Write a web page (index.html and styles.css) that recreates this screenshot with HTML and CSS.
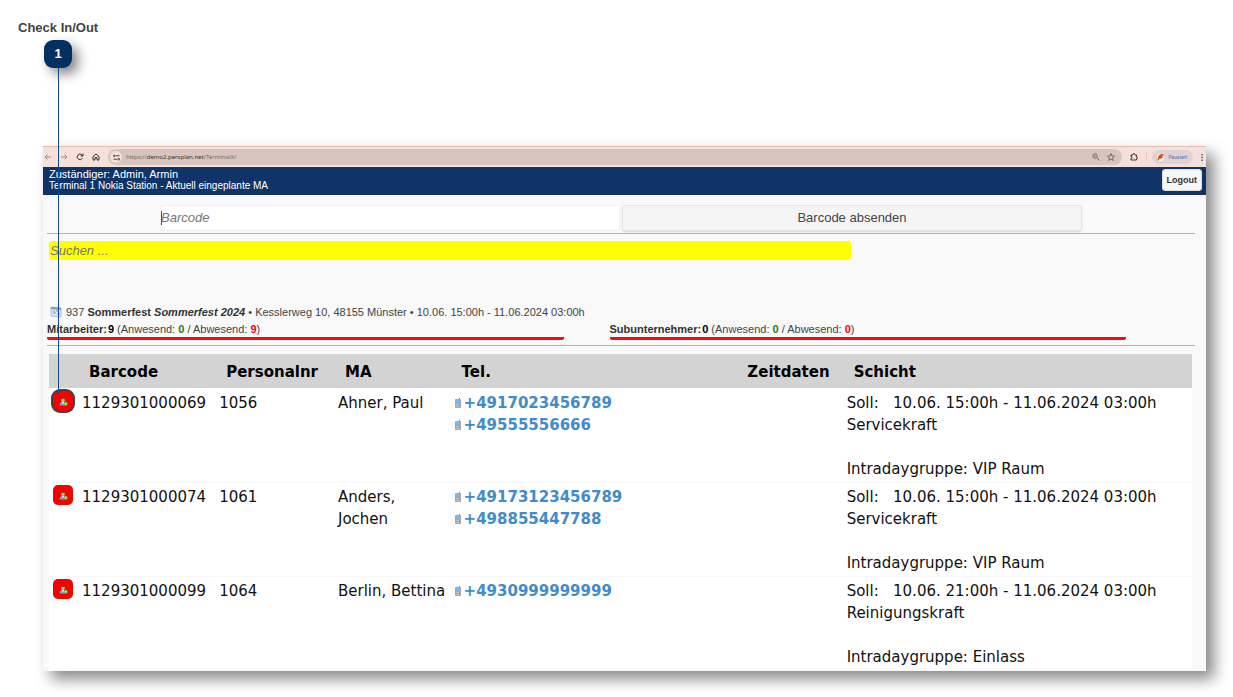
FILE: index.html
```html
<!DOCTYPE html>
<html lang="de">
<head>
<meta charset="utf-8">
<meta name="viewport" content="width=device-width, initial-scale=1">
<title>Check In/Out</title>
<link rel="stylesheet" href="styles.css">
</head>
<body>
<svg class="defs" aria-hidden="true">
  <symbol id="person" viewBox="0 0 16 16">
    <path d="M1 15c0-4 2-6 6-6s6 2 6 6z" fill="#6fa4e0"/>
    <path d="M5 9l2 4 2-4z" fill="#fff"/>
    <circle cx="7" cy="5.500" r="3.500" fill="#e9b77c"/>
    <path d="M3.500 5C3 0 11 0 10.500 5 9 3 6 3.500 3.500 5z" fill="#75502b"/>
    <circle cx="12" cy="12" r="3.500" fill="#65b548"/>
    <path d="M10 12h4m-2-2v4" stroke="#e6f6df" fill="none"/>
  </symbol>
  <symbol id="phone" viewBox="0 0 6 10">
    <path d="M4 0h1v2H4z" fill="#777"/>
    <rect x="0" y="1" width="6" height="9" rx="1" fill="#a3a7aa"/>
    <rect x="1" y="2" width="3" height="3" fill="#79b7ef"/>
    <path d="M1 6.500h3M1 8.500h3" stroke="#c4c4c4"/>
  </symbol>
</svg>
<h1 class="title">Check In/Out</h1>
<div class="callout"><span class="badge">1</span><span class="pointer"></span></div>

<main class="window">
  <div class="browser-bar">
    <nav class="nav-icons" aria-label="Browser">
      <svg class="icon faded" viewBox="0 0 16 16"><path d="M14 8H3M7 3L2 8l5 5"/></svg>
      <svg class="icon faded" viewBox="0 0 16 16"><path d="M2 8h11M9 3l5 5-5 5"/></svg>
      <svg class="icon strong" viewBox="0 0 16 16"><path d="M13 10a5.500 5.500 0 1 1-1-6l2 2M14 1v5H9"/></svg>
      <svg class="icon strong" viewBox="0 0 16 16"><path d="M2 7l6-5 6 5v7h-4V9H6v5H2z"/></svg>
    </nav>
    <div class="address">
      <span class="site-info"><svg class="icon strong" viewBox="0 0 16 16"><path d="M7 4h8M1 12h8"/><circle cx="3" cy="4" r="2"/><circle cx="13" cy="12" r="2"/></svg></span>
      <span class="url">https://<b>demo2.persplan.net</b>/TerminalX/</span>
      <svg class="icon" viewBox="0 0 16 16"><circle cx="6" cy="6" r="4.500"/><path d="M4 6h4M9.500 9.500L15 15"/></svg>
      <svg class="icon" viewBox="0 0 16 16"><path d="M8 1l2 5 5 .5-4 3.500 1.500 5L8 12l-4.500 3L5 10 1 6.500 6 6z"/></svg>
    </div>
    <svg class="icon strong" viewBox="0 0 16 16"><path d="M2 4h4c0-4 4-4 4 0h3v4c3 0 3 3 0 3v3H2v-4c3 0 3-3 0-3z"/></svg>
    <span class="divider"></span>
    <span class="profile"><svg class="flame" viewBox="0 0 10 10"><circle cx="5" cy="5" r="5" fill="#fff"/><path d="M1 9L3 2l5-2 1 2-3 2 2 1-5 2z" fill="#dc4b12" stroke="#dc4b12"/></svg>Pausiert</span>
    <svg class="dots" viewBox="0 0 2 10"><path d="M0 1h2M0 5h2M0 9h2" stroke="#555" stroke-width="2"/></svg>
  </div>

  <header class="app-header">
    <div class="station"><p class="user">Zuständiger: Admin, Armin</p><p>Terminal 1 Nokia Station - Aktuell eingeplante MA</p></div>
    <button class="logout" type="button">Logout</button>
  </header>

  <section class="content">
    <form class="barcode-form">
      <input class="barcode-input" type="text" placeholder="Barcode" aria-label="Barcode">
      <button class="submit" type="button">Barcode absenden</button>
    </form>
    <div class="search-row"><input class="search" type="search" placeholder="Suchen ..." aria-label="Suchen"></div>
    <div class="event">
      <svg class="event-icon" viewBox="0 0 12 12"><path d="M1 1l10 1v9L1 10z" fill="#dbe9f3" stroke="#a9bfcd"/><path d="M1 2l10 1" stroke="#7d9cb1" stroke-width="2"/><path d="M3 5h2m1 0h3M3 7h3m1 1h3" stroke="#68a2cc"/></svg>
      <span>937 <strong>Sommerfest <em>Sommerfest 2024</em></strong> • Kesslerweg 10, 48155 Münster • 10.06. 15:00h - 11.06.2024 03:00h</span>
    </div>
    <div class="counts">
      <p class="count"><strong>Mitarbeiter:<span class="total">9</span></strong> (Anwesend: <b class="present">0</b> / Abwesend: <b class="absent">9</b>)</p>
      <p class="count"><strong>Subunternehmer:<span class="total">0</span></strong> (Anwesend: <b class="present">0</b> / Abwesend: <b class="absent">0</b>)</p>
    </div>

    <table class="staff">
      <colgroup><col class="c-action"><col class="c-barcode"><col class="c-number"><col class="c-name"><col class="c-phone"><col class="c-time"><col></colgroup>
      <thead><tr><td></td><th>Barcode</th><th>Personalnr</th><th>MA</th><th>Tel.</th><th>Zeitdaten</th><th>Schicht</th></tr></thead>
      <tbody>
        <tr>
          <td class="action"><button class="check selected" type="button" aria-label="Check In/Out Ahner, Paul"><svg><use href="#person"/></svg></button></td>
          <td>1129301000069</td><td>1056</td><td>Ahner, Paul</td>
          <td><a class="tel" href="tel:+4917023456789"><svg><use href="#phone"/></svg>+4917023456789</a><a class="tel" href="tel:+49555556666"><svg><use href="#phone"/></svg>+49555556666</a></td>
          <td></td><td>Soll: &nbsp; 10.06. 15:00h - 11.06.2024 03:00h<br>Servicekraft<br><br>Intradaygruppe: VIP Raum</td>
        </tr>
        <tr>
          <td class="action"><button class="check" type="button" aria-label="Check In/Out Anders, Jochen"><svg><use href="#person"/></svg></button></td>
          <td>1129301000074</td><td>1061</td><td>Anders, Jochen</td>
          <td><a class="tel" href="tel:+49173123456789"><svg><use href="#phone"/></svg>+49173123456789</a><a class="tel" href="tel:+498855447788"><svg><use href="#phone"/></svg>+498855447788</a></td>
          <td></td><td>Soll: &nbsp; 10.06. 15:00h - 11.06.2024 03:00h<br>Servicekraft<br><br>Intradaygruppe: VIP Raum</td>
        </tr>
        <tr>
          <td class="action"><button class="check" type="button" aria-label="Check In/Out Berlin, Bettina"><svg><use href="#person"/></svg></button></td>
          <td>1129301000099</td><td>1064</td><td>Berlin, Bettina</td>
          <td><a class="tel" href="tel:+4930999999999"><svg><use href="#phone"/></svg>+4930999999999</a></td>
          <td></td><td>Soll: &nbsp; 10.06. 21:00h - 11.06.2024 03:00h<br>Reinigungskraft<br><br>Intradaygruppe: Einlass</td>
        </tr>
      </tbody>
    </table>
  </section>
</main>
</body>
</html>
```
FILE: styles.css
```css
* { box-sizing: border-box; }
body {
  position: relative;
  margin: 0;
  padding: 20px 27px 26px 43px;
  background: #fff;
  color: #444;
  font-family: "Liberation Sans", Arial, sans-serif;
}
p { margin: 0; }
input, button { font-family: inherit; color: inherit; }
.defs { position: absolute; width: 0; height: 0; }

.title {
  margin: 0 0 110px -25px;
  font-size: 13px;
  font-weight: 700;
  line-height: 16px;
}

/* numbered marker with its line down to the first check button */
.callout {
  position: absolute;
  z-index: 1;
  left: 44px;
  top: 40px;
  display: flex;
  flex-direction: column;
  align-items: center;
  pointer-events: none;
}
.badge {
  width: 28px;
  height: 28px;
  border-radius: 9px;
  background: #042f61;
  box-shadow: 6px 6px 12px #0007;
  color: #fff;
  font-size: 13px;
  font-weight: 700;
  line-height: 28px;
  text-align: center;
}
.pointer { width: 1px; height: 326px; background: #0e4a94; }

.window { background: #f9f9f9; box-shadow: 8px 8px 14px #0007; }

.browser-bar {
  display: flex;
  align-items: center;
  gap: 8px;
  height: 21px;
  padding-right: 3px;
  border-top: 1px solid #e5bdb3;
  background: #f5e1d9;
}
.icon { flex: none; width: 8px; height: 8px; fill: none; stroke: #776b66; stroke-width: 2; }
.icon.faded { stroke: #9d8e89; }
.icon.strong { stroke: #39322f; }
.nav-icons { display: flex; gap: 8px; padding-left: 1px; }
.address {
  flex: 1;
  display: flex;
  align-items: center;
  gap: 7px;
  height: 16px;
  padding: 0 7px 0 2px;
  border-radius: 8px;
  background: #d5c5be;
}
.site-info { display: grid; place-items: center; width: 12px; height: 12px; border-radius: 6px; background: #f5e1d9; }
.site-info .icon { width: 7px; height: 7px; }
.url { flex: 1; margin-left: -3px; font: 6px "Noto Sans", sans-serif; color: #746a66; }
.url b { font-weight: 400; color: #39322f; }
.divider { width: 1px; height: 8px; background: #f0c3ad; }
.profile {
  display: flex;
  align-items: center;
  gap: 4px;
  height: 14px;
  margin-left: -3px;
  padding: 0 6px 0 5px;
  border-radius: 7px;
  background: #e1d1d4;
  color: #526aa9;
  font: 5px Roboto, sans-serif;
}
.flame { width: 7px; height: 7px; }
.dots { width: 2px; height: 7px; }

.app-header {
  display: flex;
  align-items: flex-start;
  justify-content: space-between;
  min-height: 28px;
  padding: 2px 4px 0 6px;
  background: #103468;
  color: #fff;
  font-size: 10px;
  line-height: 11px;
}
.user { font-size: 11px; }
.logout {
  height: 22px;
  padding: 0 4px;
  border: 1px solid #ddd;
  border-radius: 3px;
  background: #f6f6f6;
  color: #333;
  font-size: 9px;
  font-weight: 700;
}

.content { padding: 10px 11px 1px 4px; }
.barcode-form {
  display: grid;
  grid-template-columns: 1fr 1fr;
  gap: 2px;
  padding: 0 113px 2px;
  border-bottom: 1px solid #aab4c0;
}
.barcode-input, .submit { min-width: 0; height: 26px; border-radius: 3px; font-size: 13px; }
.barcode-input {
  padding: 0 0 1px;
  border: 1px solid #f1f1f1;
  background: linear-gradient(#555, #555) 0 5px / 1px 14px no-repeat #fff;
}
.barcode-input::placeholder, .search::placeholder { color: #777; font-style: italic; opacity: 1; }
.submit { padding: 0 0 1px; border: 1px solid #e5e5e5; background: #f5f5f5; box-shadow: 0 1px 2px #0002; }
.search-row { padding: 7px 0 42px 2px; }
.search {
  display: block;
  width: 70%;
  height: 19px;
  padding: 0 1px;
  border: 0;
  border-radius: 3px;
  background: #ff0;
  font-size: 13px;
  appearance: none;
}
.event { display: flex; align-items: center; gap: 4px; padding: 0 3px; font-size: 11px; line-height: 20px; }
.event strong, .count strong { color: #333; }
.event-icon { width: 12px; height: 12px; }
.counts {
  display: grid;
  grid-template-columns: 45% 45%;
  column-gap: 4%;
  padding-bottom: 5px;
  border-bottom: 1px solid #aab4c0;
}
.count { border-bottom: 3px solid #ee0d14; border-radius: 2px; font-size: 11px; line-height: 15px; }
.count .total { margin-left: 1px; color: #000; }
.present { color: #257c12; }
.absent { color: #f00; }

.staff {
  width: calc(100% - 5px);
  margin: 8px 3px 0 2px;
  border-collapse: collapse;
  table-layout: fixed;
  background: #fff;
  color: #111;
  font: 15px/22px "DejaVu Sans", Verdana, sans-serif;
}
.c-action { width: 29px; }
.c-barcode { width: 12%; }
.c-number { width: 10.4%; }
.c-name { width: 10.2%; }
.c-phone { width: 25%; }
.c-time { width: 9.3%; }
.staff thead { background: #d3d3d3; color: #000; }
.staff th { padding: 7px 0 5px 11px; text-align: left; white-space: nowrap; }
.staff td { padding: 4px 4px 2px; vertical-align: top; }
.staff tbody tr + tr { box-shadow: inset 0 1px #f8f8f8; }
.staff .action { padding: 3px 0 3px 2px; }
.check {
  display: grid;
  place-items: center;
  width: 20px;
  height: 20px;
  margin-left: 2px;
  padding: 0;
  border: 0;
  border-radius: 5px;
  background: #f80000;
}
.check.selected { border-radius: 7px; box-shadow: 0 0 0 2px #444; }
.check svg { width: 9px; height: 9px; }
.tel { display: flex; align-items: center; gap: 3px; color: #428bca; font-weight: 700; text-decoration: none; }
.tel svg { width: 6px; height: 10px; }
```
